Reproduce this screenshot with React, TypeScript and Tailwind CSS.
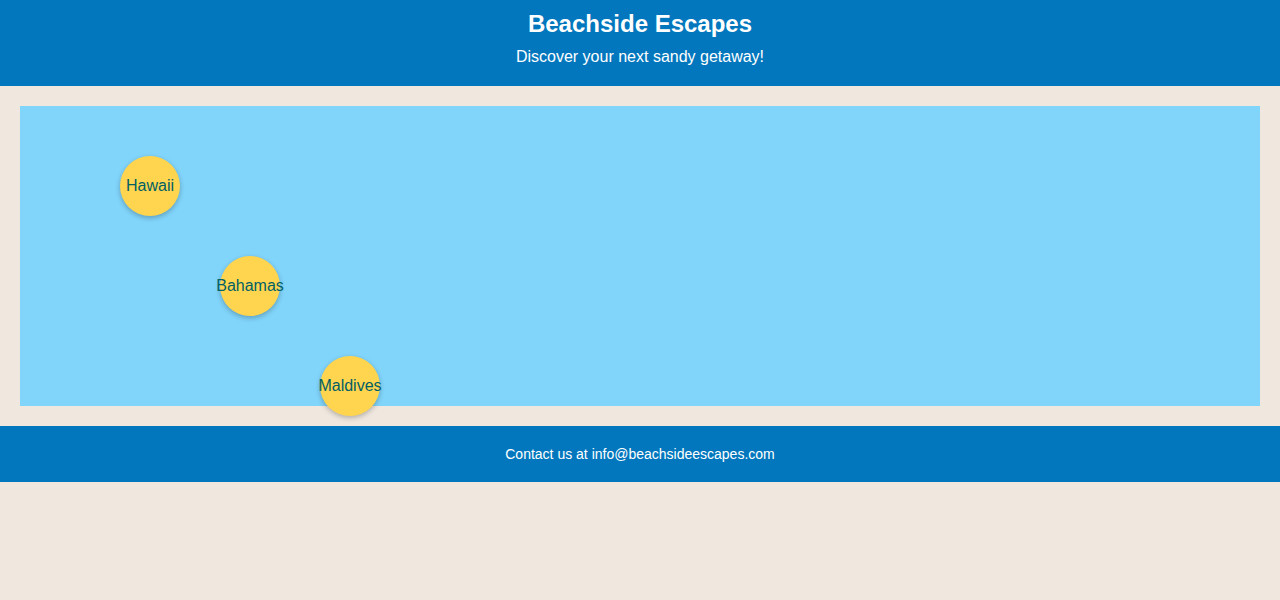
const spots = [
  { name: 'Hawaii', pos: 'left-[100px] top-[50px]' },
  { name: 'Bahamas', pos: 'left-[200px] top-[150px]' },
  { name: 'Maldives', pos: 'left-[300px] top-[250px]' },
]

export default function App() {
  return (
    <div className="min-h-[600px] bg-[#f0e8df] font-['Liberation_Sans',Arial,sans-serif]">
      <header className="flex h-[86px] flex-col items-center bg-[#0277bd] pt-[10px] text-white">
        <h1 className="text-2xl leading-[28px] font-bold">Beachside Escapes</h1>
        <p className="mt-[10px] text-base leading-[18px]">Discover your next sandy getaway!</p>
      </header>
      <main className="p-5">
        <div className="relative h-[300px] bg-[#81d4fa]">
          {spots.map((s) => (
            <div
              key={s.name}
              className={`absolute ${s.pos} flex h-[60px] w-[60px] items-center justify-center rounded-full bg-[#ffd54f] text-base text-[#006064] shadow-[0_2px_5px_rgba(0,0,0,0.25)]`}
            >
              {s.name}
            </div>
          ))}
        </div>
      </main>
      <footer className="flex h-[56px] items-center justify-center bg-[#0277bd] text-sm text-white">
        Contact us at info@beachsideescapes.com
      </footer>
    </div>
  )
}
